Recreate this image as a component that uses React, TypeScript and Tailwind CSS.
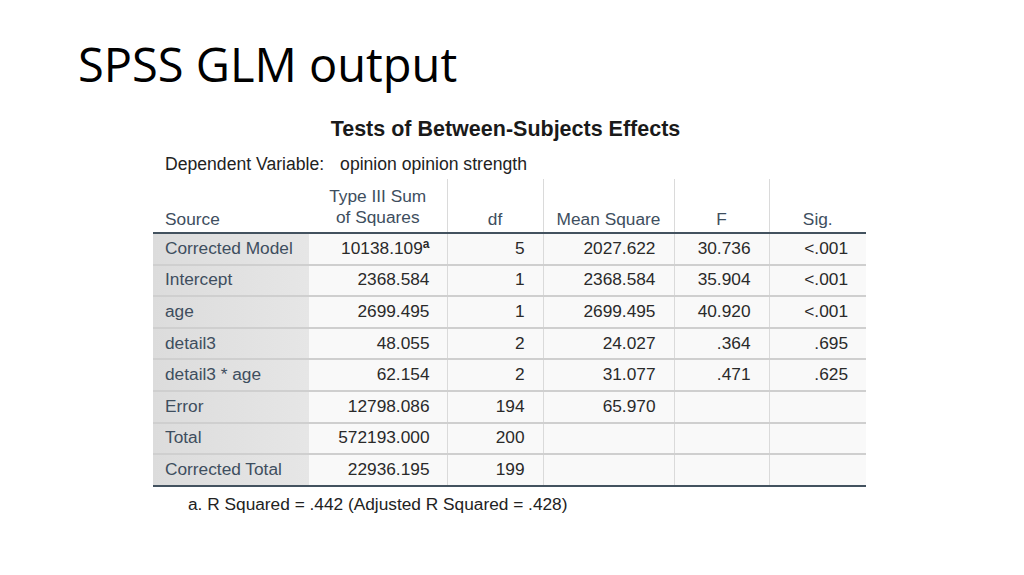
const rows: { source: string; ss: string; sup?: string; df: string; ms: string; f: string; sig: string }[] = [
	{ source: "Corrected Model", ss: "10138.109", sup: "a", df: "5", ms: "2027.622", f: "30.736", sig: "<.001" },
	{ source: "Intercept", ss: "2368.584", df: "1", ms: "2368.584", f: "35.904", sig: "<.001" },
	{ source: "age", ss: "2699.495", df: "1", ms: "2699.495", f: "40.920", sig: "<.001" },
	{ source: "detail3", ss: "48.055", df: "2", ms: "24.027", f: ".364", sig: ".695" },
	{ source: "detail3 * age", ss: "62.154", df: "2", ms: "31.077", f: ".471", sig: ".625" },
	{ source: "Error", ss: "12798.086", df: "194", ms: "65.970", f: "", sig: "" },
	{ source: "Total", ss: "572193.000", df: "200", ms: "", f: "", sig: "" },
	{ source: "Corrected Total", ss: "22936.195", df: "199", ms: "", f: "", sig: "" },
];

const cell = "border-l border-[#dadada] bg-[#f9f9f9] pr-[18px] text-right text-[#2a2a2a]";

export default function App() {
	return (
		<div className="h-[575px] w-[1024px] overflow-hidden bg-white">
			<h1 className="pl-[78px] pt-[36px] text-[47px] leading-[56px] text-black" style={{ fontFamily: '"Open Sans", "Noto Sans", sans-serif' }}>
				SPSS GLM output
			</h1>

			<div className="ml-[153px] mt-[24px] w-[713px]" style={{ fontFamily: '"Liberation Sans", Arial, sans-serif' }}>
				<div className="pr-[8px] text-center text-[21.5px] font-bold leading-[26px] text-[#1a1a1a]">Tests of Between-Subjects Effects</div>
				<div className="mt-[12px] pl-[12px] text-[17.6px] leading-[20px] text-[#222]">
					Dependent Variable:<span className="ml-[16px]">opinion opinion strength</span>
				</div>

				<table className="mt-[5px] w-[713px] table-fixed border-collapse text-[17.3px]">
					<colgroup>
						<col className="w-[156px]" />
						<col className="w-[138px]" />
						<col className="w-[96px]" />
						<col className="w-[131px]" />
						<col className="w-[95px]" />
						<col className="w-[97px]" />
					</colgroup>
					<thead>
						<tr className="h-[54px] border-b-2 border-[#43525f] text-[#3e4e5e]">
							<th className="pb-[3px] pl-[12px] text-left align-bottom font-normal leading-[20px]">Source</th>
							<th className="pb-[4px] text-center align-bottom font-normal leading-[21px]">
								Type III Sum
								<br />
								of Squares
							</th>
							<th className="border-l border-[#dadada] pb-[3px] text-center align-bottom font-normal leading-[20px]">df</th>
							<th className="border-l border-[#dadada] pb-[3px] text-center align-bottom font-normal leading-[20px]">Mean Square</th>
							<th className="border-l border-[#dadada] pb-[3px] text-center align-bottom font-normal leading-[20px]">F</th>
							<th className="border-l border-[#dadada] pb-[3px] text-center align-bottom font-normal leading-[20px]">Sig.</th>
						</tr>
					</thead>
					<tbody>
						{rows.map((r, i) => (
							<tr
								key={r.source}
								className={
									i === rows.length - 1
										? "h-[31.6px] border-b-2 border-[#43525f]"
										: "h-[31.6px] border-b-2 border-[#cfcfcf]"
								}
							>
								<td className="bg-gradient-to-r from-[#dcdcdc] to-[#e6e6e6] pl-[12px] text-left text-[#3e4e5e]">{r.source}</td>
								<td className="bg-[#f9f9f9] pr-[17px] text-right text-[#2a2a2a]">
									{r.ss}
									{r.sup ? <sup className="text-[12px] font-bold">{r.sup}</sup> : null}
								</td>
								<td className={cell}>{r.df}</td>
								<td className={cell}>{r.ms}</td>
								<td className={cell}>{r.f}</td>
								<td className={cell}>{r.sig}</td>
							</tr>
						))}
					</tbody>
				</table>

				<div className="mt-[7px] pl-[35px] text-[17.3px] leading-[20px] text-[#222]">a. R Squared = .442 (Adjusted R Squared = .428)</div>
			</div>
		</div>
	);
}
